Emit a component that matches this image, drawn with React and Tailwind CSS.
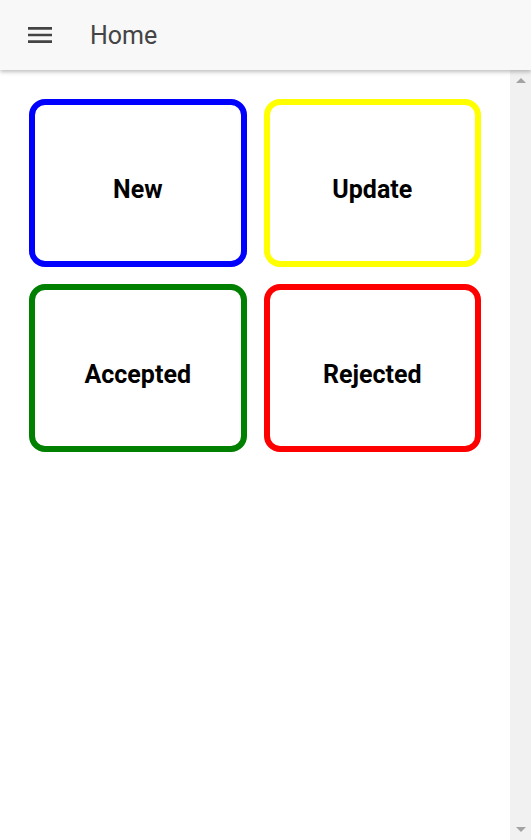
import React from "react";

const cards = [
  { label: "New", border: "border-[#0000ff]" },
  { label: "Update", border: "border-[#ffff00]" },
  { label: "Accepted", border: "border-[#008000]" },
  { label: "Rejected", border: "border-[#ff0000]" },
];

const App = () => {
  return (
    <div className="h-[840px] w-[531px] flex flex-col bg-white font-['Roboto',sans-serif] overflow-hidden">
      <header className="relative z-10 h-[70px] shrink-0 flex items-center bg-[#f8f8f8] shadow-[0_2px_4px_rgba(0,0,0,0.25)]">
        <button className="ml-[24px] w-[32px] h-[32px] flex items-center justify-center">
          <svg width="32" height="32" viewBox="0 0 24 24" fill="#444">
            <path d="M3 18h18v-2H3v2zm0-5h18v-2H3v2zm0-7v2h18V6H3z" />
          </svg>
        </button>
        <h1 className="ml-[34px] text-[25px] text-[#444] leading-none">Home</h1>
      </header>

      <div className="flex flex-1 min-h-0">
        <main className="flex-1 px-[29px] pt-[29px]">
          <div className="grid grid-cols-2 gap-[17px]">
            {cards.map((c) => (
              <div
                key={c.label}
                className={`h-[168px] flex items-center justify-center pt-[13px] rounded-[16px] border-[6px] ${c.border}`}
              >
                <span className="text-[25px] font-bold text-black leading-none">
                  {c.label}
                </span>
              </div>
            ))}
          </div>
        </main>
        <div className="w-[21px] shrink-0 bg-[#f1f1f1] flex flex-col items-center justify-between py-[8px]">
          <span className="w-0 h-0 border-x-[5px] border-x-transparent border-b-[5px] border-b-[#a3a3a3]" />
          <span className="w-0 h-0 border-x-[5px] border-x-transparent border-t-[5px] border-t-[#a3a3a3]" />
        </div>
      </div>
    </div>
  );
};

export default App;
